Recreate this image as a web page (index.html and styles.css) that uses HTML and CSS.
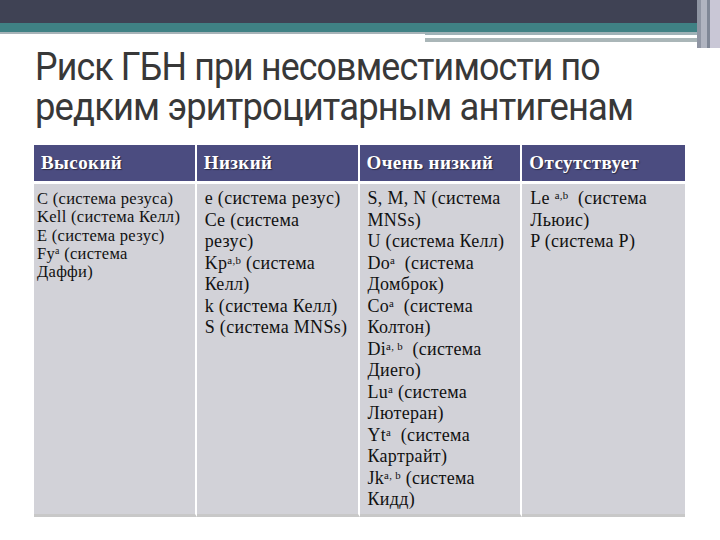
FILE: index.html
```html
<!DOCTYPE html>
<html lang="ru">
<head>
<meta charset="utf-8">
<title>Риск ГБН</title>
<link rel="stylesheet" href="styles.css">
</head>
<body>
<div class="slide">
  <div class="deco">
    <div class="bar-dark"></div>
    <div class="bar-teal"></div>
    <div class="stripes">
      <div class="stripe-left"></div>
      <div class="stripe-right">
        <div class="sr-a"></div>
        <div class="sr-gap"></div>
        <div class="sr-b"></div>
      </div>
    </div>
    <div class="edge">
      <span class="edge-l1"></span><span class="edge-l2"></span><span class="edge-l3"></span>
    </div>
  </div>
  <h1 class="title"><span class="tline">Риск ГБН при несовместимости по</span><span class="tline tline-wide">редким эритроцитарным антигенам</span></h1>
  <table class="risk">
    <thead>
      <tr>
        <th>Высокий</th>
        <th>Низкий</th>
        <th>Очень низкий</th>
        <th>Отсутствует</th>
      </tr>
    </thead>
    <tbody>
      <tr>
        <td class="small">C (система резуса)<br>Kell (система Келл)<br>E (система резус)<br>Fy<sup>a</sup> (система<br>Даффи)</td>
        <td>e (система резус)<br>Ce (система<br>резус)<br>Kp<sup>a,b</sup> (система<br>Келл)<br>k (система Келл)<br>S (система MNSs)</td>
        <td>S, M, N (система<br>MNSs)<br>U (система Келл)<br>Do<sup>a</sup> &nbsp;(система<br>Домброк)<br>Co<sup>a</sup> &nbsp;(система<br>Колтон)<br>Di<sup>a, b</sup> &nbsp;(система<br>Диего)<br>Lu<sup>a</sup> (система<br>Лютеран)<br>Yt<sup>a</sup> &nbsp;(система<br>Картрайт)<br>Jk<sup>a, b</sup> (система<br>Кидд)</td>
        <td>Le <sup>a,b</sup> &nbsp;(система<br>Льюис)<br>P (система P)</td>
      </tr>
    </tbody>
  </table>
</div>
</body>
</html>
```
FILE: styles.css
```css
html, body {
  margin: 0;
  padding: 0;
  background: #ffffff;
}
.slide {
  position: relative;
  width: 720px;
  height: 540px;
  overflow: hidden;
  background: #ffffff;
}
.deco {
  position: relative;
}
.bar-dark {
  height: 23px;
  background: #3f4254;
}
.bar-teal {
  height: 9px;
  background: #3f8184;
}
.stripes {
  display: flex;
  height: 11px;
}
.stripe-left {
  width: 425px;
  height: 2px;
  background: #a7b3b8;
}
.stripe-right {
  width: 272px;
  display: flex;
  flex-direction: column;
}
.sr-a {
  height: 3px;
  background: #9fb2b7;
}
.sr-gap {
  height: 3px;
  background: #ffffff;
}
.sr-b {
  height: 4px;
  background: #aab6b8;
}
.edge {
  position: absolute;
  top: 0;
  right: 0;
  width: 23px;
  height: 48px;
  display: flex;
  background: #c9c7d6;
}
.edge span {
  display: block;
  height: 100%;
}
.edge-l1 { width: 4px; background: #8f95a3; }
.edge-l2 { width: 6px; background: #b0b4c0; }
.edge-l3 { width: 3px; background: #7f8796; }
.title {
  margin: 4px 0 0 35px;
  font-family: Roboto, "Open Sans", sans-serif;
  font-weight: normal;
  font-size: 38px;
  line-height: 40px;
  letter-spacing: -0.9px;
  color: #383838;
  height: 98px;
  display: flex;
  flex-direction: column;
  align-items: flex-start;
}
.tline {
  display: block;
  white-space: nowrap;
  transform: scaleX(0.94);
  transform-origin: left center;
}
.tline-wide {
  transform: scaleX(0.958);
}
.risk {
  margin-left: 34px;
  border-collapse: separate;
  border-spacing: 0;
  width: 651px;
  table-layout: fixed;
  font-family: "Liberation Serif", "Times New Roman", serif;
}
.risk th {
  background: #4b4c80;
  color: #ffffff;
  font-weight: bold;
  font-size: 19px;
  letter-spacing: 0.4px;
  text-align: left;
  height: 36px;
  padding: 0 0 0 7px;
  border-right: 2px solid #ffffff;
  border-bottom: 3px solid #ffffff;
  text-shadow: 1px 1px 1px #2a2a40;
}
.risk th:last-child,
.risk td:last-child {
  border-right: none;
}
.risk td {
  background: #d2d2d8;
  color: #111111;
  vertical-align: top;
  font-size: 18px;
  letter-spacing: 0.3px;
  line-height: 21.5px;
  padding: 4px 0 3px 8px;
  height: 320px;
  border-right: 2px solid #ffffff;
  border-bottom: 3px solid #c8c8c8;
}
.risk td.small {
  font-size: 16.5px;
  line-height: 18.3px;
  padding-left: 3px;
  padding-top: 6px;
}
.risk sup {
  font-size: 0.6em;
  line-height: 0;
  vertical-align: 0.5em;
}
```
